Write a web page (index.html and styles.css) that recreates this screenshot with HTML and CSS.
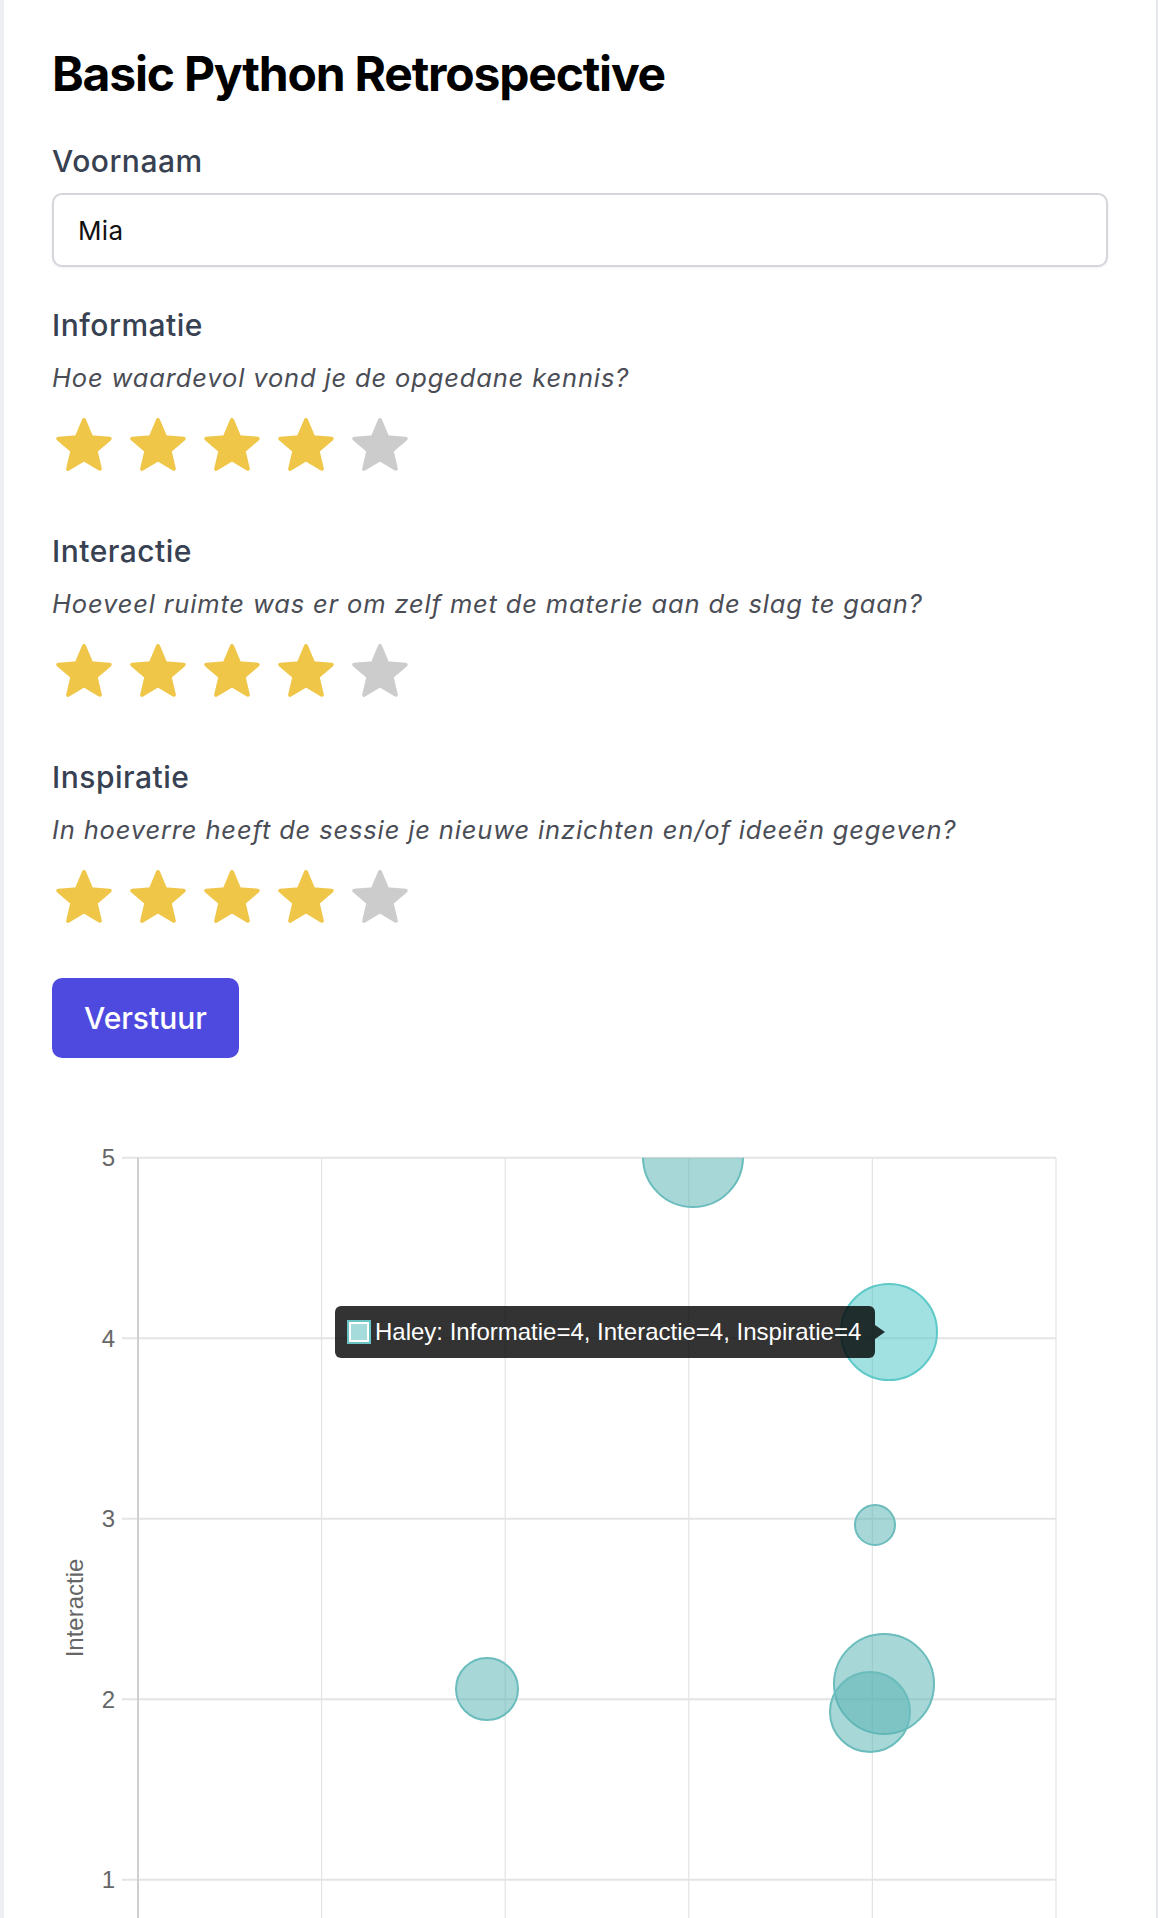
FILE: index.html
```html
<!DOCTYPE html>
<html lang="nl">
<head>
<meta charset="utf-8">
<title>Basic Python Retrospective</title>
<link rel="stylesheet" href="styles.css">
</head>
<body>
<svg class="defs" width="0" height="0" aria-hidden="true">
  <defs>
    <symbol id="star" viewBox="0 0 56 54">
      <polygon points="28,2 35.17,19.13 53.68,20.66 39.6,32.77 43.87,50.84 28,41.2 12.13,50.84 16.4,32.77 2.32,20.66 20.83,19.13" stroke-width="4" stroke-linejoin="round"/>
    </symbol>
  </defs>
</svg>
<main class="page">
  <h1 class="title">Basic Python Retrospective</h1>

  <form class="form">
    <label class="label" for="voornaam">Voornaam</label>
    <input class="input" id="voornaam" type="text" value="Mia">

    <section class="rating">
      <h2 class="label">Informatie</h2>
      <p class="question">Hoe waardevol vond je de opgedane kennis?</p>
      <div class="stars">
        <svg class="star on"><use href="#star"/></svg>
        <svg class="star on"><use href="#star"/></svg>
        <svg class="star on"><use href="#star"/></svg>
        <svg class="star on"><use href="#star"/></svg>
        <svg class="star off"><use href="#star"/></svg>
      </div>
    </section>

    <section class="rating">
      <h2 class="label">Interactie</h2>
      <p class="question">Hoeveel ruimte was er om zelf met de materie aan de slag te gaan?</p>
      <div class="stars">
        <svg class="star on"><use href="#star"/></svg>
        <svg class="star on"><use href="#star"/></svg>
        <svg class="star on"><use href="#star"/></svg>
        <svg class="star on"><use href="#star"/></svg>
        <svg class="star off"><use href="#star"/></svg>
      </div>
    </section>

    <section class="rating">
      <h2 class="label">Inspiratie</h2>
      <p class="question">In hoeverre heeft de sessie je nieuwe inzichten en/of ideeën gegeven?</p>
      <div class="stars">
        <svg class="star on"><use href="#star"/></svg>
        <svg class="star on"><use href="#star"/></svg>
        <svg class="star on"><use href="#star"/></svg>
        <svg class="star on"><use href="#star"/></svg>
        <svg class="star off"><use href="#star"/></svg>
      </div>
    </section>

    <button class="button" type="button">Verstuur</button>
  </form>

  <svg class="chart" width="1056" height="860" viewBox="0 0 1056 860">
    <defs>
      <clipPath id="area"><rect x="86" y="57.7" width="918" height="803"/></clipPath>
    </defs>
    <g class="vgrid">
      <line x1="269.6" y1="57.7" x2="269.6" y2="860"/>
      <line x1="453.2" y1="57.7" x2="453.2" y2="860"/>
      <line x1="636.8" y1="57.7" x2="636.8" y2="860"/>
      <line x1="820.4" y1="57.7" x2="820.4" y2="860"/>
      <line x1="1004" y1="57.7" x2="1004" y2="860"/>
    </g>
    <g class="hgrid">
      <line x1="70" y1="57.7" x2="1004" y2="57.7"/>
      <line x1="70" y1="238.2" x2="1004" y2="238.2"/>
      <line x1="70" y1="418.7" x2="1004" y2="418.7"/>
      <line x1="70" y1="599.2" x2="1004" y2="599.2"/>
      <line x1="70" y1="779.7" x2="1004" y2="779.7"/>
    </g>
    <line class="yaxis" x1="86" y1="57.7" x2="86" y2="860"/>
    <g class="ticks">
      <text x="63" y="66">5</text>
      <text x="63" y="246.5">4</text>
      <text x="63" y="427">3</text>
      <text x="63" y="607.5">2</text>
      <text x="63" y="788">1</text>
    </g>
    <text class="axis-title" transform="translate(31 508) rotate(-90)">Interactie</text>
    <g class="bubbles" clip-path="url(#area)">
      <circle cx="641" cy="57" r="50"/>
      <circle cx="823" cy="425" r="20"/>
      <circle cx="435" cy="589" r="31"/>
      <circle cx="832" cy="584" r="50"/>
      <circle cx="818" cy="612" r="40"/>
      <circle class="hover" cx="837" cy="232" r="48"/>
    </g>
    <g class="tooltip">
      <rect class="tip-bg" x="283" y="206" width="540" height="52" rx="6"/>
      <polygon class="tip-bg" points="823,225 833,232 823,239"/>
      <rect class="tip-box" x="296" y="221" width="22" height="22"/>
      <rect class="tip-fill" x="299" y="224" width="16" height="16"/>
      <text class="tip-text" x="323" y="240">Haley: Informatie=4, Interactie=4, Inspiratie=4</text>
    </g>
  </svg>
</main>
</body>
</html>
```

FILE: styles.css
```css
html, body {
  margin: 0;
  padding: 0;
  background: #ffffff;
}

.defs {
  position: absolute;
  width: 0;
  height: 0;
  overflow: hidden;
}

.page {
  box-sizing: border-box;
  width: 1158px;
  border-left: 4px solid #eceef1;
  border-right: 2px solid #e6e7ea;
  padding: 50px 48px 0 48px;
  font-family: "Inter", "Noto Sans", sans-serif;
  background: #ffffff;
}

.title {
  margin: 0;
  font-size: 48px;
  line-height: 48px;
  font-weight: 700;
  color: #000000;
  letter-spacing: -0.025em;
}

.form {
  display: flex;
  flex-direction: column;
  align-items: flex-start;
  margin-top: 45px;
}

.label {
  display: block;
  margin: 0;
  font-size: 30px;
  line-height: 36px;
  font-weight: 500;
  letter-spacing: 0.5px;
  color: #374151;
}

.input {
  box-sizing: border-box;
  width: 100%;
  height: 74px;
  margin-top: 14px;
  padding: 0 24px;
  border: 2px solid #d4d6db;
  border-radius: 10px;
  box-shadow: 0 1px 3px rgba(0, 0, 0, 0.06);
  font-family: "Inter", "Noto Sans", sans-serif;
  font-size: 26px;
  letter-spacing: 0.3px;
  color: #111111;
  background: #ffffff;
  outline: none;
}

.rating {
  margin-top: 40px;
}

.rating + .rating {
  margin-top: 61px;
}

.question {
  margin: 19px 0 0 0;
  font-size: 25.5px;
  line-height: 32px;
  font-style: italic;
  letter-spacing: 0.85px;
  color: #4a4d55;
}

.stars {
  display: flex;
  gap: 18px;
  margin-top: 24px;
  padding-left: 4px;
}

.star {
  width: 56px;
  height: 54px;
  display: block;
}

.star.on {
  fill: #efc648;
  stroke: #efc648;
}

.star.off {
  fill: #cccccc;
  stroke: #cccccc;
}

.button {
  margin-top: 54px;
  height: 80px;
  padding: 0 32px;
  border: none;
  border-radius: 10px;
  background: #4f4adf;
  color: #ffffff;
  font-family: "Inter", "Noto Sans", sans-serif;
  font-size: 30px;
  font-weight: 500;
}

.chart {
  display: block;
  margin-top: 42px;
  overflow: visible;
}

.vgrid line {
  stroke: #e3e3e3;
  stroke-width: 1.2;
}

.hgrid line {
  stroke: #e4e4e4;
  stroke-width: 2;
}

.yaxis {
  stroke: #cfcfcf;
  stroke-width: 2;
}

.ticks text {
  font-family: "Liberation Sans", Arial, sans-serif;
  font-size: 24px;
  fill: #666666;
  text-anchor: end;
}

.axis-title {
  font-family: "Liberation Sans", Arial, sans-serif;
  font-size: 24px;
  fill: #666666;
  text-anchor: middle;
}

.bubbles circle {
  fill: rgba(88, 178, 179, 0.52);
  stroke: #6bbcbd;
  stroke-width: 2;
}

.bubbles circle.hover {
  fill: rgba(70, 196, 196, 0.5);
  stroke: #5ec9c9;
}

.tip-bg {
  fill: rgba(0, 0, 0, 0.8);
}

.tip-box {
  fill: #ffffff;
  stroke: #6bc4c4;
  stroke-width: 2;
}

.tip-fill {
  fill: #a6dbdb;
}

.tip-text {
  font-family: "Liberation Sans", Arial, sans-serif;
  font-size: 24px;
  fill: #ffffff;
}
```
